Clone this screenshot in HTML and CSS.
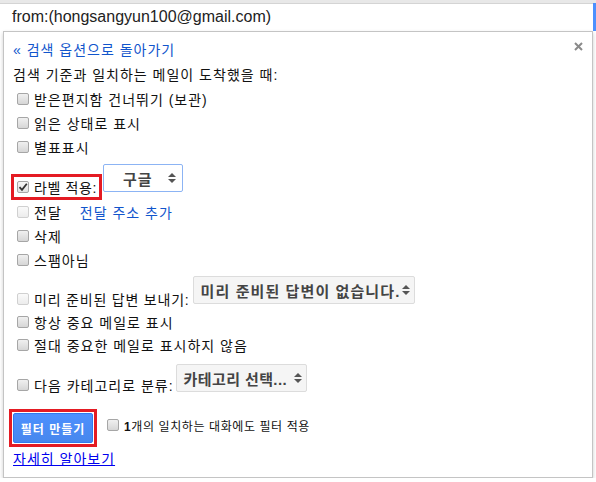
FILE: index.html
```html
<!DOCTYPE html>
<html lang="ko">
<head>
    <meta charset="UTF-8">
    <title>필터 만들기</title>
    <link rel="stylesheet" href="styles.css">
</head>
<body>

    <div class="search">
        <div class="search-field">from:(hongsangyun100@gmail.com)</div>
        <div class="search-btn"></div>
    </div>

    <div class="panel">
        <svg class="close" width="9" height="9" viewBox="0 0 9 9">
            <path d="M1 1L8 8M8 1L1 8" stroke="#8a8a8a" stroke-width="2"/>
        </svg>

        <div class="back"><a href="#">« 검색 옵션으로 돌아가기</a></div>
        <div class="heading">검색 기준과 일치하는 메일이 도착했을 때:</div>

        <div class="row"><span class="cb"></span>받은편지함 건너뛰기 (보관)</div>
        <div class="row"><span class="cb"></span>읽은 상태로 표시</div>
        <div class="row"><span class="cb"></span>별표표시</div>

        <div class="group group-label">
            <div class="boxed">
                <span class="cb checked">
                    <svg width="10" height="10" viewBox="0 0 10 10"><path d="M1.5 5.2L4 7.8L8.8 1.8" fill="none" stroke="#333" stroke-width="1.8"/></svg>
                </span>라벨 적용:
            </div>
            <div class="select focus">
                <span>구글</span>
                <svg width="8" height="12" viewBox="0 0 8 12"><path d="M0 5L4 1L8 5ZM0 7L4 11L8 7Z" fill="#555"/></svg>
            </div>
        </div>

        <div class="row"><span class="cb disabled"></span>전달<a class="forward" href="#">전달 주소 추가</a></div>
        <div class="row"><span class="cb"></span>삭제</div>
        <div class="row"><span class="cb"></span>스팸아님</div>

        <div class="group group-canned">
            <div class="row"><span class="cb disabled"></span>미리 준비된 답변 보내기:</div>
            <div class="select canned">
                <span>미리 준비된 답변이 없습니다.</span>
                <svg width="8" height="12" viewBox="0 0 8 12"><path d="M0 5L4 1L8 5ZM0 7L4 11L8 7Z" fill="#555"/></svg>
            </div>
        </div>

        <div class="row short"><span class="cb"></span>항상 중요 메일로 표시</div>
        <div class="row"><span class="cb"></span>절대 중요한 메일로 표시하지 않음</div>

        <div class="group group-category">
            <div class="row"><span class="cb"></span>다음 카테고리로 분류:</div>
            <div class="select category">
                <span>카테고리 선택...</span>
                <svg width="8" height="12" viewBox="0 0 8 12"><path d="M0 5L4 1L8 5ZM0 7L4 11L8 7Z" fill="#555"/></svg>
            </div>
        </div>

        <div class="actions">
            <div class="btn-box"><button type="button">필터 만들기</button></div>
            <div class="also"><span class="cb"></span><span><b>1</b>개의 일치하는 대화에도 필터 적용</span></div>
        </div>

        <div class="learn"><a href="#">자세히 알아보기</a></div>
    </div>

</body>
</html>
```

FILE: styles.css
```css
body {
    margin: 0;
    background-color: #fff;
    font-family: "Liberation Sans", "Noto Sans CJK KR", sans-serif;
    font-size: 14px;
    letter-spacing: 1px;
    color: #111;
    border-top: 3px solid #e8e8e8;
}
a {
    color: #15c;
    text-decoration: none;
}
.search {
    display: flex;
    height: 28px;
}
.search-field {
    flex: 1;
    box-sizing: border-box;
    border-top: 1px solid #d4d4d4;
    padding-left: 12px;
    font-family: "Liberation Sans", sans-serif;
    font-size: 16px;
    letter-spacing: 0;
    line-height: 26px;
    color: #222;
}
.search-btn {
    width: 3px;
    background-color: #4d90fe;
}
.panel {
    position: relative;
    margin-left: 3px;
    width: 590px;
    box-sizing: border-box;
    border: 1px solid #c4c4c4;
    padding: 4px 0 8px 9px;
    background-color: #fff;
    box-shadow: 0 2px 4px rgba(0, 0, 0, 0.2);
}
.close {
    position: absolute;
    top: 10px;
    right: 9px;
}
.back {
    height: 25px;
    display: flex;
    align-items: center;
}
.heading {
    height: 26px;
    display: flex;
    align-items: center;
}
.row {
    display: flex;
    align-items: center;
    height: 24px;
    padding-left: 4px;
    white-space: nowrap;
}
.row.short {
    height: 23px;
}
.cb {
    display: inline-flex;
    align-items: center;
    justify-content: center;
    flex: none;
    width: 12px;
    height: 12px;
    box-sizing: border-box;
    margin-right: 5px;
    border: 1px solid #a6a6a6;
    border-radius: 2px;
    background: linear-gradient(#f0f0f0, #d6d6d6);
}
.cb.disabled {
    border-color: #d0d0d0;
    background: linear-gradient(#fafafa, #ececec);
}
.cb.checked {
    background: linear-gradient(#f6f6f6, #e2e2e2);
}
.group {
    display: flex;
    align-items: flex-start;
}
.group-label {
    height: 41px;
}
.boxed {
    display: flex;
    align-items: center;
    height: 20px;
    margin-top: 15px;
    margin-left: -2px;
    padding: 0 2px 0 3px;
    border: 3px solid #e41b23;
    letter-spacing: 0.6px;
}
.select {
    display: flex;
    align-items: center;
    justify-content: space-between;
    flex: none;
    height: 28px;
    box-sizing: border-box;
    border: 1px solid #dcdcdc;
    border-radius: 2px;
    background-color: #f5f5f5;
    font-size: 15px;
    font-weight: bold;
    letter-spacing: 0.4px;
    color: #444;
    white-space: nowrap;
}
.select.focus {
    width: 80px;
    margin-top: 5px;
    margin-left: 1px;
    padding: 0 6px 0 19px;
    background-color: #fff;
    border-color: #8cb4f4;
    letter-spacing: 1px;
}
.group-canned {
    height: 38px;
}
.group-canned .row {
    margin-top: 15px;
    letter-spacing: 0.8px;
}
.select.canned {
    width: 222px;
    margin-top: 4px;
    margin-left: 3px;
    padding: 0 4px 0 7px;
    letter-spacing: 1.1px;
}
.group-category {
    height: 52px;
}
.group-category .row {
    margin-top: 16px;
}
.select.category {
    width: 131px;
    margin-top: 7px;
    margin-left: 2px;
    padding: 0 4px 0 7px;
}
.forward {
    margin-left: 18px;
}
.actions {
    display: flex;
    align-items: flex-start;
    height: 38px;
}
.btn-box {
    margin-left: -4px;
    padding: 1px;
    border: 3px solid #e41b23;
}
.btn-box button {
    display: block;
    width: 80px;
    height: 30px;
    border: 1px solid #3079ed;
    border-radius: 2px;
    background: linear-gradient(#4d90fe, #4787ed);
    color: #fff;
    font-family: "Liberation Sans", "Noto Sans CJK KR", sans-serif;
    font-size: 12px;
    font-weight: bold;
    letter-spacing: 1px;
    cursor: pointer;
}
.also {
    display: flex;
    align-items: center;
    height: 16px;
    margin-top: 8px;
    margin-left: 10px;
    font-size: 12px;
    letter-spacing: 0.6px;
}
.also .cb {
    margin-right: 5px;
}
.learn {
    height: 22px;
    display: flex;
    align-items: center;
}
.learn a {
    color: #00e;
    text-decoration: underline;
}
```
